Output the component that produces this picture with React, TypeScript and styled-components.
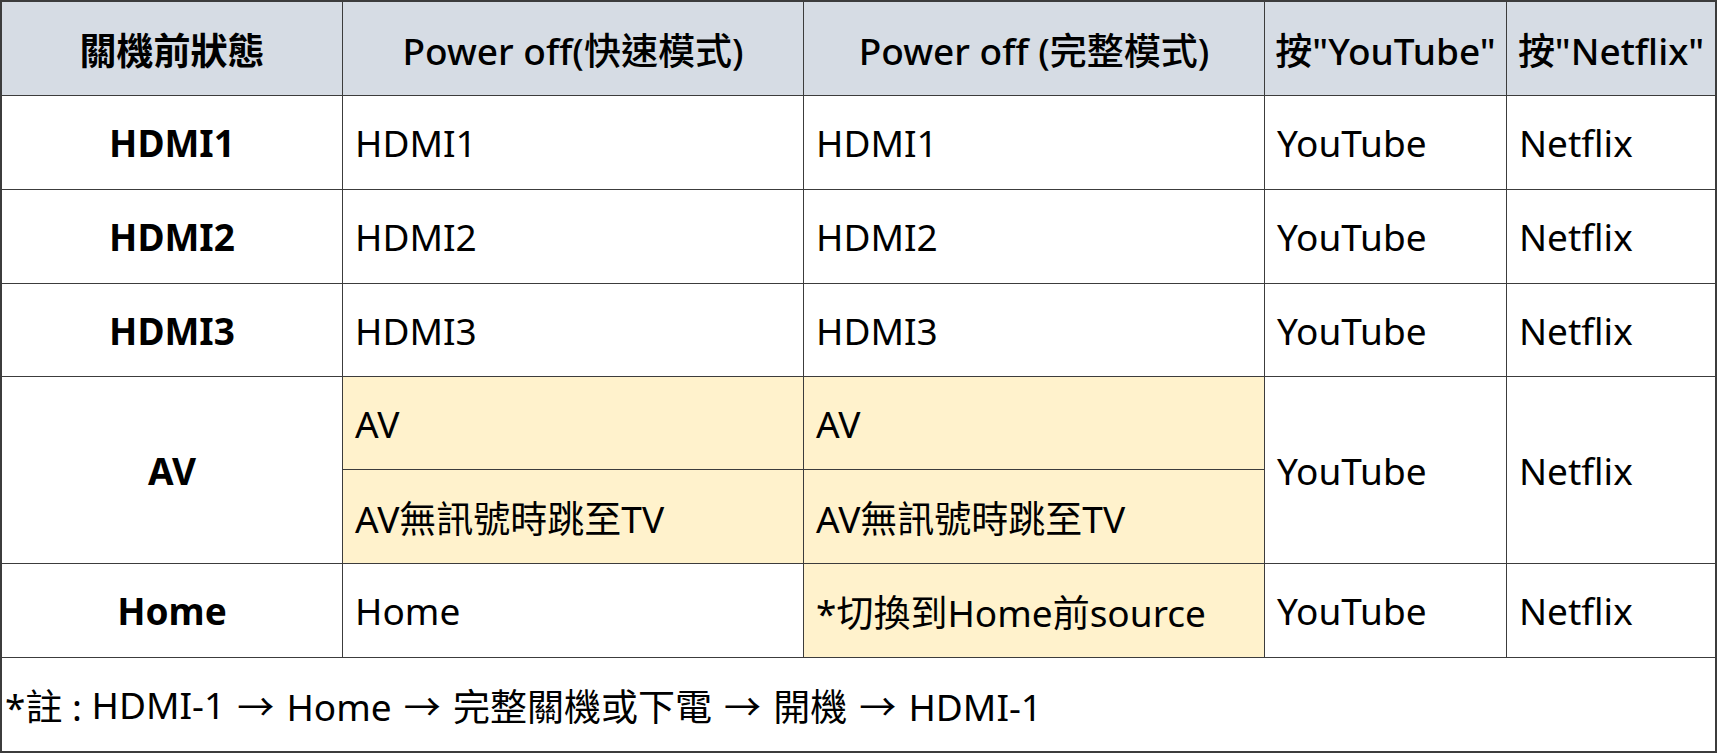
import { createGlobalStyle } from "styled-components";
import styled from "styled-components";

const GlobalStyle = createGlobalStyle`
  html, body {
    margin: 0;
    padding: 0;
    background: #ffffff;
  }
  body {
    font-family: "Noto Sans", "Noto Sans CJK TC", sans-serif;
    color: #000;
  }
`;

const LINE = "#3c3c3c";

const Table = styled.div`
  display: grid;
  grid-template-columns: 340px 460px 460px 241px 208px;
  grid-template-rows: 93px 93px 93px 92px 92px 93px 93px 93px;
  gap: 1px;
  width: max-content;
  background: ${LINE};
  border: 2px solid ${LINE};
`;

type CellProps = {
  $bg?: string;
  $center?: boolean;
  $weight?: number;
  $rows?: number;
  $cols?: number;
};

const Cell = styled.div<CellProps>`
  display: flex;
  align-items: center;
  justify-content: ${(p) => (p.$center ? "center" : "flex-start")};
  padding: 0 ${(p) => (p.$center ? "0" : "12px")};
  background: ${(p) => p.$bg ?? "#ffffff"};
  font-size: 37px;
  font-weight: ${(p) => p.$weight ?? 400};
  white-space: nowrap;
  grid-row: span ${(p) => p.$rows ?? 1};
  grid-column: span ${(p) => p.$cols ?? 1};
`;

const HeadCell = styled(Cell).attrs({ $center: true })`
  background: #d6dce4;
  padding: 0;
`;

const Note = styled(Cell)`
  padding: 0 3px;
  white-space: pre;
`;

const Arrow = styled.span`
  display: inline-block;
  padding: 0 2.5px;
`;

const YELLOW = "#fff2cc";

type Row = {
  label: string;
  quick: string;
  full: string;
};

const simpleRows: Row[] = [
  { label: "HDMI1", quick: "HDMI1", full: "HDMI1" },
  { label: "HDMI2", quick: "HDMI2", full: "HDMI2" },
  { label: "HDMI3", quick: "HDMI3", full: "HDMI3" },
];

const noteSteps = ["HDMI-1", "Home", "完整關機或下電", "開機", "HDMI-1"];

export default function App() {
  return (
    <>
      <GlobalStyle />
      <Table>
        <HeadCell $weight={700}>關機前狀態</HeadCell>
        <HeadCell $weight={500}>Power off(快速模式)</HeadCell>
        <HeadCell $weight={500}>Power off (完整模式)</HeadCell>
        <HeadCell $weight={500}>按"YouTube"</HeadCell>
        <HeadCell $weight={500}>按"Netflix"</HeadCell>

        {simpleRows.flatMap((r) => [
          <Cell key={r.label + "-l"} $center $weight={700}>
            {r.label}
          </Cell>,
          <Cell key={r.label + "-q"}>{r.quick}</Cell>,
          <Cell key={r.label + "-f"}>{r.full}</Cell>,
          <Cell key={r.label + "-y"}>YouTube</Cell>,
          <Cell key={r.label + "-n"}>Netflix</Cell>,
        ])}

        {/* AV 兩列 */}
        <Cell $center $weight={700} $rows={2}>
          AV
        </Cell>
        <Cell $bg={YELLOW}>AV</Cell>
        <Cell $bg={YELLOW}>AV</Cell>
        <Cell $rows={2}>YouTube</Cell>
        <Cell $rows={2}>Netflix</Cell>
        <Cell $bg={YELLOW}>AV無訊號時跳至TV</Cell>
        <Cell $bg={YELLOW}>AV無訊號時跳至TV</Cell>

        <Cell $center $weight={700}>
          Home
        </Cell>
        <Cell>Home</Cell>
        <Cell $bg={YELLOW}>*切換到Home前source</Cell>
        <Cell>YouTube</Cell>
        <Cell>Netflix</Cell>

        <Note $cols={5}>
          {"*註 : "}
          {noteSteps.map((s, i) => (
            <span key={i}>
              {i > 0 && (
                <>
                  {" "}
                  <Arrow>→</Arrow>{" "}
                </>
              )}
              {s}
            </span>
          ))}
        </Note>
      </Table>
    </>
  );
}
